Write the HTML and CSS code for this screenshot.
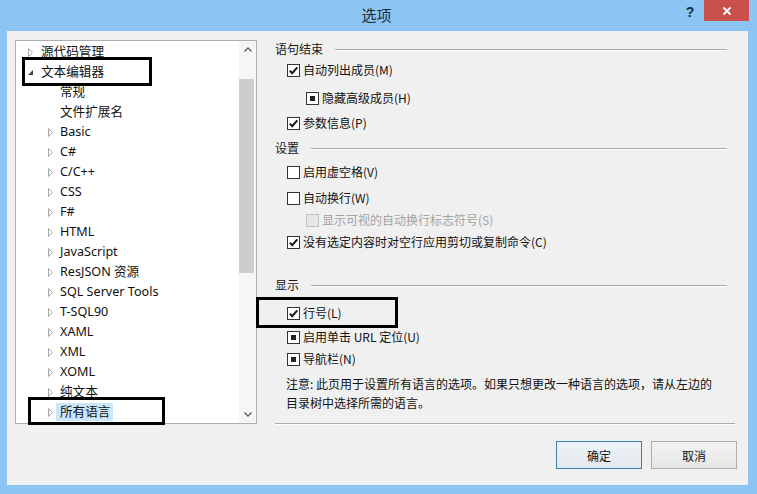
FILE: index.html
```html
<!DOCTYPE html>
<html lang="zh-CN">
<head>
<meta charset="utf-8">
<title>选项</title>
<link rel="stylesheet" href="styles.css">
</head>
<body>
<div class="window">
  <div class="titlebar">
    <div class="title">选项</div>
    <div class="help">?</div>
    <div class="close">
      <svg width="10" height="10" viewBox="0 0 10 10"><path d="M1.5 1.5 L8.5 8.5 M8.5 1.5 L1.5 8.5" stroke="#fff" stroke-width="1.8" fill="none"/></svg>
    </div>
  </div>
  <div class="client">
    <div class="main">
      <div class="tree">
        <div class="tree-list">
          <div class="node lv0"><span class="arrow"><svg width="6" height="9" viewBox="0 0 6 9"><polygon points="0.5,0.5 4.5,4.5 0.5,8.5" fill="#fff" stroke="#a6a6a6"/></svg></span><span>源代码管理</span></div>
          <div class="node lv0"><span class="arrow"><svg width="6" height="9" viewBox="0 0 6 9"><polygon points="5,2 5,7 0,7" fill="#404040"/></svg></span><span>文本编辑器</span></div>
          <div class="node lv1">常规</div>
          <div class="node lv1">文件扩展名</div>
          <div class="node lv2"><span class="arrow"><svg width="6" height="9" viewBox="0 0 6 9"><polygon points="0.5,0.5 4.5,4.5 0.5,8.5" fill="#fff" stroke="#a6a6a6"/></svg></span><span>Basic</span></div>
          <div class="node lv2"><span class="arrow"><svg width="6" height="9" viewBox="0 0 6 9"><polygon points="0.5,0.5 4.5,4.5 0.5,8.5" fill="#fff" stroke="#a6a6a6"/></svg></span><span>C#</span></div>
          <div class="node lv2"><span class="arrow"><svg width="6" height="9" viewBox="0 0 6 9"><polygon points="0.5,0.5 4.5,4.5 0.5,8.5" fill="#fff" stroke="#a6a6a6"/></svg></span><span>C/C++</span></div>
          <div class="node lv2"><span class="arrow"><svg width="6" height="9" viewBox="0 0 6 9"><polygon points="0.5,0.5 4.5,4.5 0.5,8.5" fill="#fff" stroke="#a6a6a6"/></svg></span><span>CSS</span></div>
          <div class="node lv2"><span class="arrow"><svg width="6" height="9" viewBox="0 0 6 9"><polygon points="0.5,0.5 4.5,4.5 0.5,8.5" fill="#fff" stroke="#a6a6a6"/></svg></span><span>F#</span></div>
          <div class="node lv2"><span class="arrow"><svg width="6" height="9" viewBox="0 0 6 9"><polygon points="0.5,0.5 4.5,4.5 0.5,8.5" fill="#fff" stroke="#a6a6a6"/></svg></span><span>HTML</span></div>
          <div class="node lv2"><span class="arrow"><svg width="6" height="9" viewBox="0 0 6 9"><polygon points="0.5,0.5 4.5,4.5 0.5,8.5" fill="#fff" stroke="#a6a6a6"/></svg></span><span>JavaScript</span></div>
          <div class="node lv2"><span class="arrow"><svg width="6" height="9" viewBox="0 0 6 9"><polygon points="0.5,0.5 4.5,4.5 0.5,8.5" fill="#fff" stroke="#a6a6a6"/></svg></span><span>ResJSON 资源</span></div>
          <div class="node lv2"><span class="arrow"><svg width="6" height="9" viewBox="0 0 6 9"><polygon points="0.5,0.5 4.5,4.5 0.5,8.5" fill="#fff" stroke="#a6a6a6"/></svg></span><span>SQL Server Tools</span></div>
          <div class="node lv2"><span class="arrow"><svg width="6" height="9" viewBox="0 0 6 9"><polygon points="0.5,0.5 4.5,4.5 0.5,8.5" fill="#fff" stroke="#a6a6a6"/></svg></span><span>T-SQL90</span></div>
          <div class="node lv2"><span class="arrow"><svg width="6" height="9" viewBox="0 0 6 9"><polygon points="0.5,0.5 4.5,4.5 0.5,8.5" fill="#fff" stroke="#a6a6a6"/></svg></span><span>XAML</span></div>
          <div class="node lv2"><span class="arrow"><svg width="6" height="9" viewBox="0 0 6 9"><polygon points="0.5,0.5 4.5,4.5 0.5,8.5" fill="#fff" stroke="#a6a6a6"/></svg></span><span>XML</span></div>
          <div class="node lv2"><span class="arrow"><svg width="6" height="9" viewBox="0 0 6 9"><polygon points="0.5,0.5 4.5,4.5 0.5,8.5" fill="#fff" stroke="#a6a6a6"/></svg></span><span>XOML</span></div>
          <div class="node lv2"><span class="arrow"><svg width="6" height="9" viewBox="0 0 6 9"><polygon points="0.5,0.5 4.5,4.5 0.5,8.5" fill="#fff" stroke="#a6a6a6"/></svg></span><span>纯文本</span></div>
          <div class="node lv2"><span class="arrow"><svg width="6" height="9" viewBox="0 0 6 9"><polygon points="0.5,0.5 4.5,4.5 0.5,8.5" fill="#fff" stroke="#a6a6a6"/></svg></span><span class="selected">所有语言</span></div>
        </div>
        <div class="scrollbar">
          <div class="sb-btn"><svg width="8" height="5" viewBox="0 0 8 5"><polyline points="0.5,4.5 4,1 7.5,4.5" fill="none" stroke="#606060" stroke-width="1.4"/></svg></div>
          <div class="sb-track"><div class="sb-thumb"></div></div>
          <div class="sb-btn"><svg width="8" height="5" viewBox="0 0 8 5"><polyline points="0.5,0.5 4,4 7.5,0.5" fill="none" stroke="#606060" stroke-width="1.4"/></svg></div>
        </div>
      </div>

      <div class="options">
        <div class="group-head"><span>语句结束</span><span class="rule"></span></div>
        <div class="opt mt2"><span class="box"><svg width="11" height="11" viewBox="0 0 11 11"><polyline points="1.8,5.6 4.2,8.2 9.3,2.3" fill="none" stroke="#1a1a1a" stroke-width="2"/></svg></span>自动列出成员(M)</div>
        <div class="opt sub mt8"><span class="box"><span class="dot"></span></span>隐藏高级成员(H)</div>
        <div class="opt mt5"><span class="box"><svg width="11" height="11" viewBox="0 0 11 11"><polyline points="1.8,5.6 4.2,8.2 9.3,2.3" fill="none" stroke="#1a1a1a" stroke-width="2"/></svg></span>参数信息(P)</div>

        <div class="group-head mt6"><span>设置</span><span class="rule"></span></div>
        <div class="opt mt5"><span class="box"></span>启用虚空格(V)</div>
        <div class="opt mt6"><span class="box"></span>自动换行(W)</div>
        <div class="opt sub disabled mt2"><span class="box"></span>显示可视的自动换行标志符号(S)</div>
        <div class="opt mt2"><span class="box"><svg width="11" height="11" viewBox="0 0 11 11"><polyline points="1.8,5.6 4.2,8.2 9.3,2.3" fill="none" stroke="#1a1a1a" stroke-width="2"/></svg></span>没有选定内容时对空行应用剪切或复制命令(C)</div>

        <div class="group-head mt24"><span>显示</span><span class="rule"></span></div>
        <div class="opt mt9"><span class="box"><svg width="11" height="11" viewBox="0 0 11 11"><polyline points="1.8,5.6 4.2,8.2 9.3,2.3" fill="none" stroke="#1a1a1a" stroke-width="2"/></svg></span>行号(L)</div>
        <div class="opt mt4"><span class="box"><span class="dot"></span></span>启用单击 URL 定位(U)</div>
        <div class="opt mt2"><span class="box"><span class="dot"></span></span>导航栏(N)</div>

        <p class="note">注意: 此页用于设置所有语言的选项。如果只想更改一种语言的选项，请从左边的<br>目录树中选择所需的语言。</p>
        <div class="separator"></div>
      </div>
    </div>
    <div class="buttons">
      <button class="btn default">确定</button>
      <button class="btn">取消</button>
    </div>
  </div>

  <div class="mark mark-editor"></div>
  <div class="mark mark-all"></div>
  <div class="mark mark-lines"></div>
</div>
</body>
</html>
```

FILE: styles.css
```css
html, body {
  margin: 0;
  padding: 0;
}
body {
  width: 757px;
  height: 494px;
  overflow: hidden;
  font-family: "Noto Sans", "Noto Sans CJK SC", sans-serif;
  font-size: 12px;
  color: #000;
}
.window {
  position: relative;
  width: 757px;
  height: 494px;
  background: #8cc5f4;
  display: flex;
  flex-direction: column;
  box-sizing: border-box;
}
.titlebar {
  height: 31px;
  display: flex;
  align-items: flex-start;
  flex: none;
}
.title {
  flex: 1;
  padding-left: 73px;
  text-align: center;
  line-height: 30px;
  font-size: 15px;
  color: #1b2a38;
  font-family: "Noto Sans CJK SC", sans-serif;
}
.help {
  width: 20px;
  margin-right: 4px;
  text-align: center;
  line-height: 24px;
  font-size: 14px;
  font-weight: bold;
  color: #1c2b3b;
  font-family: "Liberation Sans", sans-serif;
}
.close {
  width: 45px;
  height: 21px;
  margin-right: 8px;
  background: #c9504b;
  display: flex;
  align-items: center;
  justify-content: center;
}
.close svg { display: block; }

.client {
  flex: 1;
  margin: 0 9px 9px 7px;
  background: #f0f0f0;
  padding: 9px 11px 0 8px;
  display: flex;
  flex-direction: column;
}
.main {
  display: flex;
  gap: 18px;
  height: 384px;
}
.tree {
  width: 242px;
  height: 384px;
  box-sizing: border-box;
  border: 1px solid #abadb3;
  background: #fff;
  display: flex;
  flex: none;
}
.tree-list {
  flex: 1;
  overflow: hidden;
  padding-top: 1px;
}
.node {
  height: 20px;
  line-height: 20px;
  display: flex;
  align-items: center;
  white-space: nowrap;
  color: #111;
  font-size: 12.6px;
}
.node.lv0 { padding-left: 12px; }
.node.lv1 { padding-left: 44px; }
.node.lv2 { padding-left: 32px; }
.arrow {
  width: 12px;
  flex: none;
  display: flex;
  align-items: center;
}
.arrow svg { display: block; }
.node.lv0 .arrow { width: 13px; }
.selected {
  background: #c9e6fa;
  margin-left: -4px;
  padding: 0 3px 0 4px;
  line-height: 18px;
}

.scrollbar {
  width: 17px;
  flex: none;
  background: #f6f6f6;
  display: flex;
  flex-direction: column;
}
.sb-btn {
  height: 17px;
  display: flex;
  align-items: center;
  justify-content: center;
}
.sb-btn svg { display: block; }
.sb-track {
  flex: 1;
  padding-top: 21px;
}
.sb-thumb {
  height: 194px;
  width: 15px;
  background: #cdcdcd;
}

.options {
  width: 460px;
  display: flex;
  flex-direction: column;
}
.group-head {
  height: 18px;
  line-height: 18px;
  display: flex;
  align-items: center;
  gap: 12px;
  padding-right: 8px;
  color: #1a1a1a;
  font-family: "Noto Sans CJK SC", sans-serif;
}
.rule {
  flex: 1;
  height: 1px;
  background: #a9a9a9;
  box-shadow: 0 1px 0 #fff;
}
.opt {
  height: 20px;
  line-height: 20px;
  display: flex;
  align-items: center;
  padding-left: 12px;
  white-space: nowrap;
  font-family: "Noto Sans CJK SC", sans-serif;
  color: #111;
}
.opt.sub { padding-left: 31px; }
.box {
  width: 13px;
  height: 13px;
  box-sizing: border-box;
  border: 1px solid #333;
  background: #fff;
  margin-right: 3px;
  display: flex;
  align-items: center;
  justify-content: center;
  flex: none;
}
.box svg { display: block; }
.dot {
  width: 5px;
  height: 5px;
  background: #222;
}
.opt.disabled { color: #a3a3a3; }
.opt.disabled .box {
  border-color: #c2c2c2;
  background: #e6e6e6;
}

.mt2 { margin-top: 2px; }
.mt4 { margin-top: 4px; }
.mt5 { margin-top: 5px; }
.mt6 { margin-top: 6px; }
.mt8 { margin-top: 8px; }
.mt9 { margin-top: 9px; }
.mt24 { margin-top: 24px; }

.note {
  margin: 5px 0 0 0;
  padding-left: 11px;
  line-height: 19px;
  color: #111;
  font-family: "Noto Sans CJK SC", sans-serif;
}
.separator {
  margin-top: 11px;
  height: 1px;
  background: #a9a9a9;
  box-shadow: 0 1px 0 #fff;
}

.buttons {
  margin-top: 17px;
  display: flex;
  justify-content: flex-end;
  gap: 9px;
}
.btn {
  width: 86px;
  height: 28px;
  box-sizing: border-box;
  border: 1px solid #acacac;
  background: linear-gradient(#f2f2f2, #e6e6e6);
  font-family: "Noto Sans CJK SC", sans-serif;
  font-size: 12px;
  color: #111;
  padding: 0;
}
.btn.default {
  border-color: #3c7fb1;
  background: linear-gradient(#eef3f7, #e3e9ee);
}

.mark {
  position: absolute;
  border: 3px solid #000;
  box-sizing: border-box;
}
.mark-editor { left: 22px; top: 57px; width: 130px; height: 29px; }
.mark-all { left: 28px; top: 397px; width: 137px; height: 28px; }
.mark-lines { left: 256px; top: 297px; width: 142px; height: 31px; }
```
